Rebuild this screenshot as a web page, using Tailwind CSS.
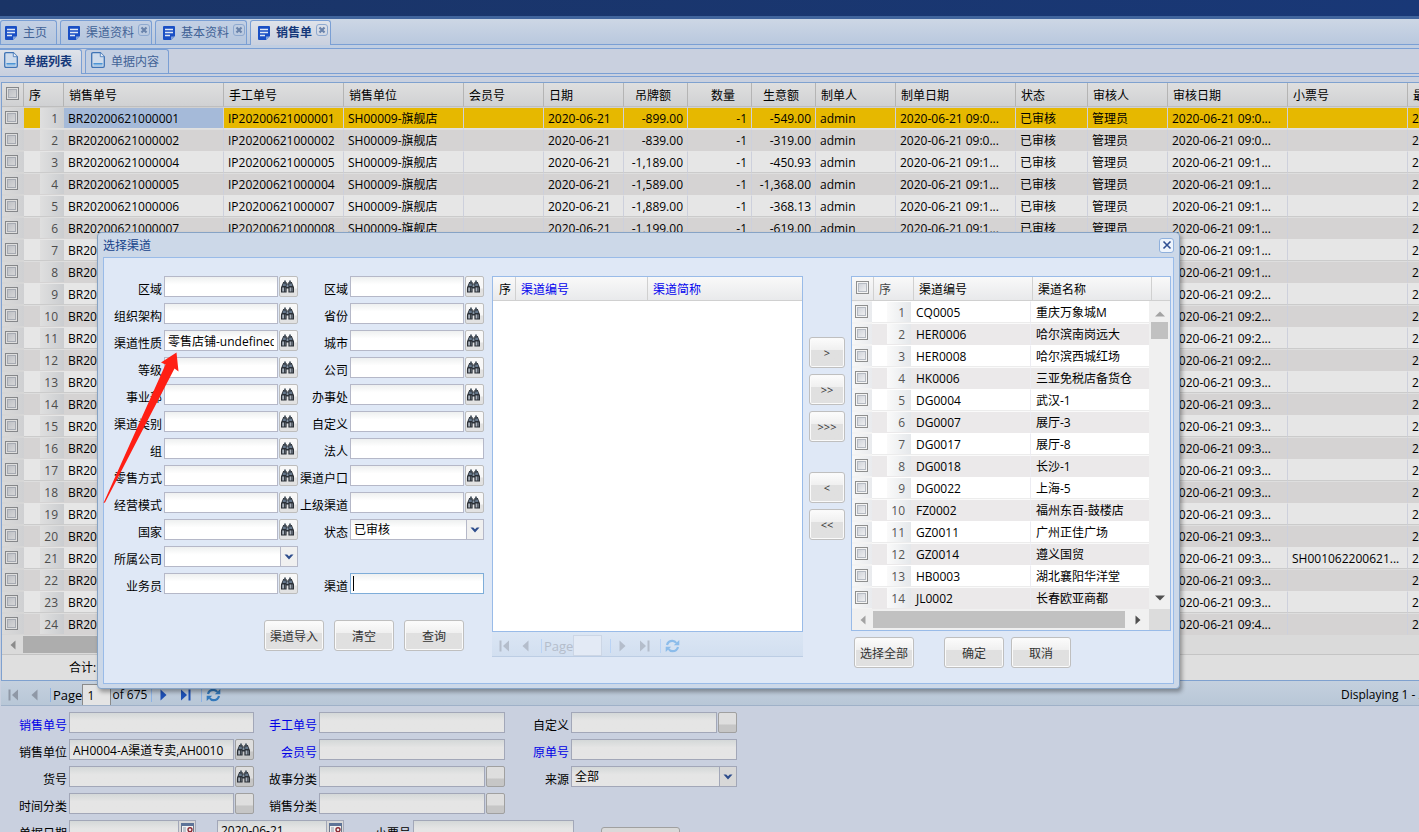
<!DOCTYPE html>
<html lang="zh-CN">
<head>
<meta charset="utf-8">
<title>销售单</title>
<script src="https://cdn.jsdelivr.net/npm/@tailwindcss/browser@4"></script>
</head>
<body class="relative h-screen overflow-hidden bg-[#c9d0df] font-['Open_Sans','Noto_Sans_CJK_SC',sans-serif] text-[12px] leading-5 text-black">

<svg class="hidden">
  <symbol id="i-doc" viewBox="0 0 12 14"><path d="M0 1Q0 0 1 0H11Q12 0 12 1V10L8 14H1Q0 14 0 13Z" fill="#1a4fc4"/><path d="M8 14V10.5H12Z" fill="#7fa0dc"/><path d="M2 3.5H10M2 6.5H10M2 9.5H7" stroke="#dfe8f5" stroke-width="1.3"/></symbol>
  <symbol id="i-page" viewBox="0 0 14 16"><path d="M.7 2Q.7 .7 2 .7H9.3L13.3 4.7V14Q13.3 15.3 12 15.3H2Q.7 15.3 .7 14Z" fill="#cfdcec" stroke="#3f74b5" stroke-width="1.3"/><path d="M9.3 .7V4.7H13.3" fill="#e9f0f8" stroke="#3f74b5" stroke-width=".8"/><path d="M2.5 11.5H11.5V13.5H2.5Z" fill="#7fb4e2"/><path d="M2.5 11.5H11.5" stroke="#4c94d4"/></symbol>
  <symbol id="i-bino" viewBox="0 0 13 13"><path d="M1 5L2.2 2H5.6V3.4H7.4V2H10.8L12 5L13 7.2V12.6H7.4V8.6H5.6V12.6H0V7.2Z" fill="#2b3037"/><path d="M3 .4H5V2.4H3ZM8 .4H10V2.4H8Z" fill="#59646f"/><path d="M2.2 3.6H4.8V6H1.6ZM8.2 3.6H10.8L11.4 6H8.2Z" fill="#66788c"/><path d="M1.2 7.6H3V11.4H1.2ZM8.6 7.6H10.4V11.4H8.6Z" fill="#aab2bc"/><path d="M3.8 7.6H4.6V11.4H3.8ZM11.2 7.6H12V11.4H11.2Z" fill="#6f7882"/><path d="M5.6 4.4H7.4V7H5.6Z" fill="#8595a5"/></symbol>
  <symbol id="i-x" viewBox="0 0 12 12"><path d="M3 3L9 9M9 3L3 9" stroke="currentColor" stroke-width="2.6"/></symbol>
  <symbol id="i-first" viewBox="0 0 11 12"><path d="M.5 .5H2.5V11.5H.5Z" fill="currentColor"/><path d="M10 .5V11.5L4 6Z" fill="currentColor"/></symbol>
  <symbol id="i-prev" viewBox="0 0 7 12"><path d="M6.5 .5V11.5L.5 6Z" fill="currentColor"/></symbol>
  <symbol id="i-next" viewBox="0 0 7 12"><path d="M.5 .5V11.5L6.5 6Z" fill="currentColor"/></symbol>
  <symbol id="i-last" viewBox="0 0 11 12"><path d="M8.5 .5H10.5V11.5H8.5Z" fill="currentColor"/><path d="M1 .5V11.5L7 6Z" fill="currentColor"/></symbol>
  <symbol id="i-ref" viewBox="0 0 15 14"><path d="M2 6Q3 1.8 7.5 1.8Q10 1.8 11.3 4M13 8Q12 12.2 7.5 12.2Q5 12.2 3.7 10" fill="none" stroke="currentColor" stroke-width="2.2"/><path d="M14.3 1V6.3H8.8ZM.7 13V7.7H6.2Z" fill="currentColor"/></symbol>
  <symbol id="i-down" viewBox="0 0 10 6"><path d="M.5 .5H3.2L5 2.2L6.8 .5H9.5L5 5.5Z" fill="#2e4d8c"/></symbol>
  <symbol id="i-cal" viewBox="0 0 13 12"><path d="M.5 .5H12.5V11.5H.5Z" fill="#f1f1f1" stroke="#6a7488"/><path d="M0 0H13V3H0Z" fill="#5d7397"/><path d="M2 5H5M2 7H5M2 9H5" stroke="#8d97aa"/><circle cx="9" cy="6.8" r="2" fill="none" stroke="#8a2a34" stroke-width="1.4"/></symbol>
</svg>

<header class="h-[19px] border-b-3 border-[#41659d] bg-linear-to-r from-[#1a3466] to-[#193877]"></header>

<nav class="flex h-[26px] items-end gap-[3px] border-b border-[#7a9fd4] bg-linear-to-b from-[#cdd7e5] to-[#b9c8de]" id="tabs"></nav>
<div class="h-1 border-b border-[#7a9fd4] bg-[#c0cee2]"></div>
<nav class="flex h-[25px] items-end gap-[3px] border-b border-[#7a9fd4]" id="subtabs"></nav>
<div class="h-[3px] border-b border-[#7a9fd4]"></div>

<main class="mt-[5px] ml-px">
  <section class="overflow-hidden border border-r-0 border-[#7fa1cf] bg-[#dadada]">
    <table class="w-[1485px] table-fixed border-separate border-spacing-0" id="grid">
      <colgroup id="gcols"></colgroup>
      <thead><tr id="ghead"></tr></thead>
      <tbody id="gbody"></tbody>
    </table>
    <div class="flex h-5 items-center border-b border-[#c4c4c4]">
      <svg class="ml-2 h-2.5 w-1.5 text-[#8b8b8b]"><use href="#i-prev"/></svg>
      <div class="ml-[7px] h-[17px] w-3/5 bg-[#adadad]"></div>
    </div>
    <div class="h-[25px] bg-[#dfdfdf] pl-[67px] leading-[25px]">合计:</div>
  </section>

  <div class="flex h-[25px] items-center border-b border-[#9fb1c8] bg-linear-to-b from-[#c4d0de] to-[#b8c7d7] pt-[3px]">
    <button aria-label="第一页" class="ml-[7px]"><svg class="h-3 w-[11px] text-[#8f98a6]"><use href="#i-first"/></svg></button>
    <button aria-label="上一页" class="ml-3"><svg class="h-3 w-[7px] text-[#8f98a6]"><use href="#i-prev"/></svg></button>
    <span class="ml-3 h-3.5 w-px bg-[#8db2e3]"></span>
    <label for="pg" class="ml-0.5 pt-px text-[13px]">Page</label>
    <input id="pg" value="1" class="h-[21px] w-[29px] border border-b-0 border-[#8a8a8a] bg-[#e4e4e4] px-1">
    <span class="ml-px pt-px">of 675</span>
    <span class="ml-1 h-3.5 w-px bg-[#8db2e3]"></span>
    <button aria-label="下一页" class="ml-2"><svg class="h-3 w-[7px] text-[#1e50b4]"><use href="#i-next"/></svg></button>
    <button aria-label="最后一页" class="ml-[13px]"><svg class="h-3 w-[11px] text-[#1e50b4]"><use href="#i-last"/></svg></button>
    <span class="ml-2.5 h-3.5 w-px bg-[#8db2e3]"></span>
    <button aria-label="刷新" class="ml-1"><svg class="h-3.5 w-[15px] text-[#3479bb]"><use href="#i-ref"/></svg></button>
    <span class="ml-auto mr-[-30px] w-[108px] pt-px whitespace-nowrap">Displaying 1 - 24 of</span>
  </div>

  <form class="mt-1.5 grid grid-cols-[253px_251px_232px] gap-y-1.5" id="query"></form>
  <div class="mt-1.5 flex items-start" id="lastrow"></div>
</main>

<div role="dialog" aria-labelledby="dlg-title" class="absolute top-[232px] left-[97px] w-[1083px] rounded border border-[#86a3c5] bg-[#ccd8e8] px-[5px] pb-1 shadow-[2px_3px_4px_rgba(0,0,0,0.35)]">
  <div class="flex h-6 items-center">
    <h2 id="dlg-title" class="pt-0.5 text-[#15428b]">选择渠道</h2>
    <button aria-label="关闭" class="ml-auto flex size-[15px] items-center justify-center rounded-[3px] border border-[#8fb0dc] bg-[#eef4fc]"><svg class="size-3" viewBox="0 0 12 12"><path d="M2.5 2.5L9.5 9.5M9.5 2.5L2.5 9.5" stroke="#2f4f93" stroke-width="1.6"/></svg></button>
  </div>
  <div class="flex h-[427px] items-start border border-[#99bbe8] bg-[#dfe8f6] pt-[18px]">
    <form class="w-[380px]">
      <div class="grid grid-cols-[194px_186px] gap-y-1.5" id="filters"></div>
      <div class="mt-[26px] ml-[160px] flex gap-2.5" id="fbtns"></div>
    </form>

    <div class="ml-2 w-[311px]">
      <div class="h-[356px] border border-[#99bbe8] bg-white">
        <table class="w-full table-fixed border-separate border-spacing-0">
          <colgroup><col class="w-[23px]"><col class="w-[132px]"><col></colgroup>
          <thead><tr class="h-6 bg-linear-to-b from-[#f9f9f9] to-[#e8e9eb] text-left">
            <th class="border-r border-b border-[#d0d0d0] pt-0.5 pl-1.5 font-normal">序</th>
            <th class="border-r border-b border-[#d0d0d0] pt-0.5 pl-[5px] font-normal text-[#0000ee]">渠道编号</th>
            <th class="border-b border-[#d0d0d0] pt-0.5 pl-[5px] font-normal text-[#0000ee]">渠道简称</th>
          </tr></thead>
        </table>
      </div>
      <div class="flex h-[25px] items-center border-b border-[#bccde4] bg-linear-to-b from-[#dbe6f4] to-[#d2dff0] pt-[3px] text-[#b4bdcb]">
        <svg class="ml-[7px] h-3 w-[11px]"><use href="#i-first"/></svg>
        <svg class="ml-3 h-3 w-[7px]"><use href="#i-prev"/></svg>
        <span class="ml-3 h-3.5 w-px bg-[#b9d3f5]"></span>
        <label for="pg2" class="ml-0.5 pt-px text-[13px]">Page</label>
        <input id="pg2" disabled class="h-[21px] w-[29px] border border-[#ccd6e5] bg-[#e3eaf5]">
        <span class="ml-2 h-3.5 w-px bg-[#b9d3f5]"></span>
        <svg class="ml-2 h-3 w-[7px]"><use href="#i-next"/></svg>
        <svg class="ml-[13px] h-3 w-[11px]"><use href="#i-last"/></svg>
        <span class="ml-2.5 h-3.5 w-px bg-[#b9d3f5]"></span>
        <svg class="ml-1 h-3.5 w-[15px] text-[#8cbcea]"><use href="#i-ref"/></svg>
      </div>
    </div>

    <div class="mt-[61px] ml-1.5 flex w-9 flex-col gap-1.5" id="movers"></div>

    <div class="ml-1.5 w-[320px]">
      <div class="h-[355px] border border-[#99bbe8] bg-[#f0f0f0]">
        <div class="flex h-6 border-b border-[#d0d0d0] bg-linear-to-b from-[#f9f9f9] to-[#e8e9eb] leading-[25px]">
          <span class="flex w-[22px] border-r border-[#d0d0d0] pt-1 pl-1"><input type="checkbox" aria-label="全选" class="size-[13px] appearance-none border border-[#8e8f8f] bg-linear-to-br from-[#c8ccd4] to-[#f6f6f6] shadow-[inset_0_0_0_1px_#f4f4f4,inset_0_0_0_2px_#b5bac2]"></span>
          <span class="w-10 border-r border-[#d0d0d0] pl-[5px] text-[#444]">序</span>
          <span class="w-[119px] border-r border-[#d0d0d0] pl-[5px]">渠道编号</span>
          <span class="w-[119px] border-r border-[#d0d0d0] pl-[5px]">渠道名称</span>
        </div>
        <div class="flex">
          <table class="w-[297px] table-fixed border-separate border-spacing-0">
            <colgroup><col class="w-[20px]"><col class="w-[39px]"><col class="w-[120px]"><col></colgroup>
            <tbody id="chan"></tbody>
          </table>
          <div class="flex flex-1 flex-col items-center pt-2.5">
            <svg class="h-1.5 w-2.5" viewBox="0 0 10 6"><path d="M0 5.5L5 .5L10 5.5Z" fill="#a3a3a3"/></svg>
            <div class="mt-[5px] h-[17px] w-[17px] bg-[#c1c1c1]"></div>
            <svg class="mt-auto mb-2 h-1.5 w-2.5" viewBox="0 0 10 6"><path d="M0 .5L5 5.5L10 .5Z" fill="#505050"/></svg>
          </div>
        </div>
        <div class="flex h-[21px] items-center">
          <svg class="ml-2 h-2.5 w-1.5 text-[#a3a3a3]"><use href="#i-prev"/></svg>
          <div class="ml-[7px] h-[17px] w-[252px] bg-[#c1c1c1]"></div>
          <svg class="ml-2.5 h-2.5 w-1.5 text-[#505050]"><use href="#i-next"/></svg>
          <div class="ml-auto h-full w-[21px] bg-[#dcdcdc]"></div>
        </div>
      </div>
      <div class="mt-1.5 flex pl-[3px]" id="okbtns"></div>
    </div>
  </div>
</div>

<svg class="pointer-events-none absolute top-[350px] left-[100px] h-[156px] w-[82px]" viewBox="100 350 82 156"><path d="M176.5 352.5L161 362.5L165.5 364.5L103.5 503L105 502.5L174.5 368.5L178.5 371.5Z" fill="#ff1f14"/></svg>

<script>
const $ = id => document.getElementById(id);
const icon = (n, c) => `<svg class="${c}"><use href="#${n}"/></svg>`;

/* tabs */
$('tabs').innerHTML = [['主页', 0, 0], ['渠道资料', 1, 0], ['基本资料', 1, 0], ['销售单', 1, 1]].map(([t, x, on], i) => `
  <button class="${on ? 'relative -mb-px h-[25px] bg-linear-to-b from-[#dfe3ea] to-[#c9d0df] font-bold text-[#15387a]' : 'h-6 bg-linear-to-b from-[#c3d0e4] to-[#b5c6de] text-[#416296]'} ${i ? 'pl-[7px]' : 'pl-1'} flex items-center rounded-t-[3px] border border-b-0 border-[#7a9fd4] ${x ? (on ? 'pr-0.5' : 'pr-px') : 'pr-[9px]'}">
    ${icon('i-doc', 'h-3.5 w-3')}<span class="ml-1.5">${t}</span>
    ${x ? `<span class="mt-[3px] ml-1 flex size-3 items-center justify-center self-start rounded-[3px] border border-[#8ea9cf] text-[#6a83ab]">${icon('i-x', 'size-2.5')}</span>` : ''}
  </button>`).join('');
$('subtabs').innerHTML = [['单据列表', 1], ['单据内容', 0]].map(([t, on]) => `
  <button class="${on ? 'relative -mb-px h-[25px] rounded-tr-[3px] border-l-0 bg-linear-to-b from-[#dfe3ea] to-[#c9d0df] pl-1 font-bold text-[#15387a]' : 'h-6 rounded-t-[3px] bg-[#c3cfe2] pl-[5px] text-[#416296]'} flex items-center border border-b-0 border-[#7a9fd4] pr-[9px]">
    ${icon('i-page', 'mb-1 h-4 w-3.5')}<span class="ml-1.5">${t}</span>
  </button>`).join('');

/* sales grid */
const cols = [['', 22], ['序', 40], ['销售单号', 160], ['手工单号', 120], ['销售单位', 120], ['会员号', 80], ['日期', 80], ['吊牌额', 64, 1], ['数量', 64, 1], ['生意额', 64, 1], ['制单人', 80], ['制单日期', 120], ['状态', 72], ['审核人', 80], ['审核日期', 120], ['小票号', 120], ['最后日期', 79]];
$('gcols').innerHTML = cols.map(c => `<col style="width:${c[1]}px">`).join('');
const box = l => `<input type="checkbox" aria-label="${l}" class="mb-0.5 block size-[13px] appearance-none border border-[#85878a] bg-linear-to-br from-[#b8bbc1] to-[#dcdcdc] shadow-[inset_0_0_0_1px_#dedede,inset_0_0_0_2px_#a6aab2]">`;
$('ghead').innerHTML = cols.map((c, i) => `<th class="h-6 border-r border-b border-r-[#b4b4b4] border-b-[#bebebe] bg-linear-to-b from-[#dfdfdf] to-[#d0d1d3] font-normal ${i ? 'pt-0.5' : 'pl-1'} ${c[2] ? 'pr-4 text-right' : 'text-left ' + (i ? 'pl-[5px]' : '')}">${i ? c[0] : box('全选')}</th>`).join('');
const br = [1, 2, 4, 5, 6, 7], ip = [1, 2, 5, 4, 7, 8];
const amt = [['-899.00', '-549.00'], ['-839.00', '-319.00'], ['-1,189.00', '-450.93'], ['-1,589.00', '-1,368.00'], ['-1,889.00', '-368.13'], ['-1,199.00', '-619.00']];
const mins = '001111112222333333333334';
$('gbody').innerHTML = [...mins].map((m, r) => {
  const no = n => String(n).padStart(2, '0'), t = `2020-06-21 09:${m}...`, a = amt[r] || amt[5];
  const cells = [`BR202006210000${no(br[r] || r + 2)}`, `IP202006210000${no(ip[r] || r + 3)}`, 'SH00009-旗舰店', '', '2020-06-21', a[0], '-1', a[1], 'admin', t, '已审核', '管理员', t, r == 20 ? 'SH001062200621...' : '', t];
  const bg = r == 0 ? 'bg-[#e6b800] border-t-[#d0d0d0] border-b-[#e0e0e0]' : r % 2 ? 'bg-[#d5d3d3] border-t-[#dedede] border-b-[#d5d3d3]' : 'bg-[#e6e6e6] border-t-[#e6e6e6] border-b-[#cbcbcb]';
  return `<tr>
    <td class="h-[22px] border-y border-y-[#d6d6d6] bg-linear-to-r from-[#dadada] to-[#cfd0d2] pl-[3px]">${box('选择行')}</td>
    <td class="h-[22px] border-y ${bg} p-0"><div class="ml-4 bg-linear-to-r from-[#dfdfdf] to-[#cbcdd0] pt-0.5 pr-1.5 text-right leading-[18px] text-[#4c4c4c]">${r + 1}</div></td>
    ${cells.map((c, i) => `<td class="h-[22px] overflow-hidden border-y border-r border-r-[#cdd0dc] pt-0.5 leading-[18px] whitespace-nowrap ${r == 0 && i == 0 ? 'border-t-[#d0d0d0] border-b-[#e0e0e0] bg-[#a5bad9]' : bg} ${i >= 5 && i <= 7 ? 'pr-1 text-right' : 'pl-1'}">${c}</td>`).join('')}
  </tr>`;
}).join('');

/* channel grid */
const ch = [['CQ0005', '重庆万象城M'], ['HER0006', '哈尔滨南岗远大'], ['HER0008', '哈尔滨西城红场'], ['HK0006', '三亚免税店备货仓'], ['DG0004', '武汉-1'], ['DG0007', '展厅-3'], ['DG0017', '展厅-8'], ['DG0018', '长沙-1'], ['DG0022', '上海-5'], ['FZ0002', '福州东百-鼓楼店'], ['GZ0011', '广州正佳广场'], ['GZ0014', '遵义国贸'], ['HB0003', '湖北襄阳华洋堂'], ['JL0002', '长春欧亚商都']];
$('chan').innerHTML = ch.map(([a, b], r) => {
  const bg = r % 2 ? 'bg-[#ebe9ea] border-t-[#fafafa] border-b-[#ebe9ea]' : 'bg-white border-t-white border-b-[#ececec]';
  return `<tr>
    <td class="h-[22px] border-y border-y-[#f3f3f3] bg-linear-to-r from-[#f8f8f8] to-[#e9ebee] pl-[3px]"><input type="checkbox" aria-label="${a}" class="mb-0.5 block size-[13px] appearance-none border border-[#8e8f8f] bg-linear-to-br from-[#c8ccd4] to-[#f6f6f6] shadow-[inset_0_0_0_1px_#f4f4f4,inset_0_0_0_2px_#b5bac2]"></td>
    <td class="border-y ${bg} p-0"><div class="ml-[15px] bg-linear-to-r from-[#fafafa] to-[#e5e8eb] pt-0.5 pr-1.5 text-right leading-[18px] text-[#555]">${r + 1}</div></td>
    <td class="border-y border-r border-r-[#ececf2] ${bg} pt-0.5 pl-[5px] leading-[18px]">${a}</td>
    <td class="border-y ${bg} pt-0.5 pl-[5px] leading-[18px]">${b}</td></tr>`;
}).join('');

/* form fields: k = b(inoculars) | e(mpty trigger) | t(ext) | s(elect) */
let n = 0;
const field = (dark, lw, f) => {
  if (!f) return '<div></div>';
  const [label, k, v = '', blue, focus] = f, id = 'f' + (++n);
  const skin = dark ? 'border-[#a2a7b8] bg-linear-to-b from-[#d4d8d8] to-[#e5e5e5] to-40%' : (focus ? 'border-[#7eadd9]' : 'border-[#b5b8c8]') + ' bg-linear-to-b from-[#eef0f0] to-white to-40%';
  const trig = dark ? 'border-[#a0a0a0] from-[#dedede] from-60% to-[#c6c6c6] to-61%' : 'border-[#bdbdbd] from-[#f8f8f8] from-60% to-[#e2e2e2] to-61%';
  const ctl = k == 's'
    ? `<span class="relative flex min-w-0 flex-1"><select id="${id}" class="h-[21px] w-full appearance-none border ${skin} pl-[3px]"><option>${v}</option></select><span class="pointer-events-none absolute top-0 right-0 flex h-[21px] w-[18px] items-center justify-center border ${dark ? 'border-[#a2a7b8] bg-[#d8d8d8]' : 'border-[#b5b8c8] bg-[#f0f0f0]'}">${icon('i-down', 'h-1.5 w-2.5')}</span></span>`
    : `<span class="relative flex min-w-0 flex-1"><input id="${id}" value="${v}" class="h-[21px] w-full border outline-none ${skin} px-[3px]">${focus ? '<span class="absolute top-[3px] left-[3px] h-[15px] w-px bg-black"></span>' : ''}</span>` +
      (k == 't' ? '' : `<button type="button" aria-label="选择${label}" class="ml-px flex h-[21px] w-[19px] items-center justify-center rounded-[2px] border bg-linear-to-b ${trig}">${k == 'b' ? icon('i-bino', 'mr-0.5 size-[13px] shrink-0') : ''}</button>`);
  return `<div class="flex items-start"><label for="${id}" class="${lw} h-[21px] shrink-0 pr-0.5 text-right leading-7 whitespace-nowrap ${blue ? 'text-[#0000e6]' : ''}">${label}</label>${ctl}</div>`;
};
$('filters').innerHTML = [
  ['区域', 'b'], ['区域', 'b'], ['组织架构', 'b'], ['省份', 'b'], ['渠道性质', 'b', '零售店铺-undefined'], ['城市', 'b'],
  ['等级', 'b'], ['公司', 'b'], ['事业部', 'b'], ['办事处', 'b'], ['渠道类别', 'b'], ['自定义', 'b'], ['组', 'b'], ['法人', 't'],
  ['零售方式', 'b'], ['渠道户口', 'b'], ['经营模式', 'b'], ['上级渠道', 'b'], ['国家', 'b'], ['状态', 's', '已审核'],
  ['所属公司', 's'], null, ['业务员', 'b'], ['渠道', 't', '', 0, 1]
].map((f, i) => field(0, i % 2 ? 'w-[52px]' : 'w-[60px]', f)).join('');
const qw = ['w-[68px]', 'w-[65px]', 'w-[66px]'];
$('query').innerHTML = [
  ['销售单号', 't', '', 1], ['手工单号', 't', '', 1], ['自定义', 'e'],
  ['销售单位', 'b', 'AH0004-A渠道专卖,AH0010'], ['会员号', 't', '', 1], ['原单号', 't', '', 1],
  ['货号', 'b'], ['故事分类', 'e'], ['来源', 's', '全部'],
  ['时间分类', 'e'], ['销售分类', 'e']
].map((f, i) => field(1, qw[i % 3], f)).join('');
const dk = 'h-[21px] border border-[#a2a7b8] bg-linear-to-b from-[#d4d8d8] to-[#e5e5e5] to-40% px-[3px]';
const cal = `<button type="button" aria-label="选择日期" class="flex h-[21px] w-[17px] items-center justify-center border border-l-0 border-[#a2a7b8] bg-[#d8d8d8]">${icon('i-cal', 'mb-1 h-3 w-[13px]')}</button>`;
$('lastrow').innerHTML = `<label for="d1" class="w-[68px] pr-0.5 text-right leading-7">单据日期</label><input id="d1" class="${dk} w-[110px]">${cal}
  <input aria-label="结束日期" value="2020-06-21" class="${dk} ml-[21px] w-[110px]">${cal}
  <label for="tk" class="w-[69px] pr-0.5 text-right leading-7">小票号</label><input id="tk" class="${dk} w-[161px]">
  <button type="button" class="mt-[7px] ml-[27px] h-[31px] w-[79px] rounded-[3px] border border-[#a0a0a0] bg-[#d9d9d9]">查询</button>`;

/* push buttons */
const btn = (t, c) => `<button type="button" class="h-[31px] ${c} rounded-[3px] border border-[#bfbfbf] bg-linear-to-b from-[#fcfcfc] from-0% via-[#f0f0f0] via-40% to-[#e0e0e0] to-41% text-[#333] shadow-[inset_0_0_0_1px_#fafafa]">${t}</button>`;
$('fbtns').innerHTML = ['渠道导入', '清空', '查询'].map(t => btn(t, 'w-[60px] pt-0.5')).join('');
$('movers').innerHTML = [['&gt;', ''], ['&gt;&gt;', ''], ['&gt;&gt;&gt;', ''], ['&lt;', 'mt-6'], ['&lt;&lt;', '']].map(([t, c]) => btn(t, 'text-[11px] ' + c)).join('');
$('okbtns').innerHTML = btn('选择全部', 'w-[60px] pt-0.5') + btn('确定', 'ml-[30px] w-[60px] pt-0.5') + btn('取消', 'ml-[7px] w-[60px] pt-0.5');
</script>
</body>
</html>
